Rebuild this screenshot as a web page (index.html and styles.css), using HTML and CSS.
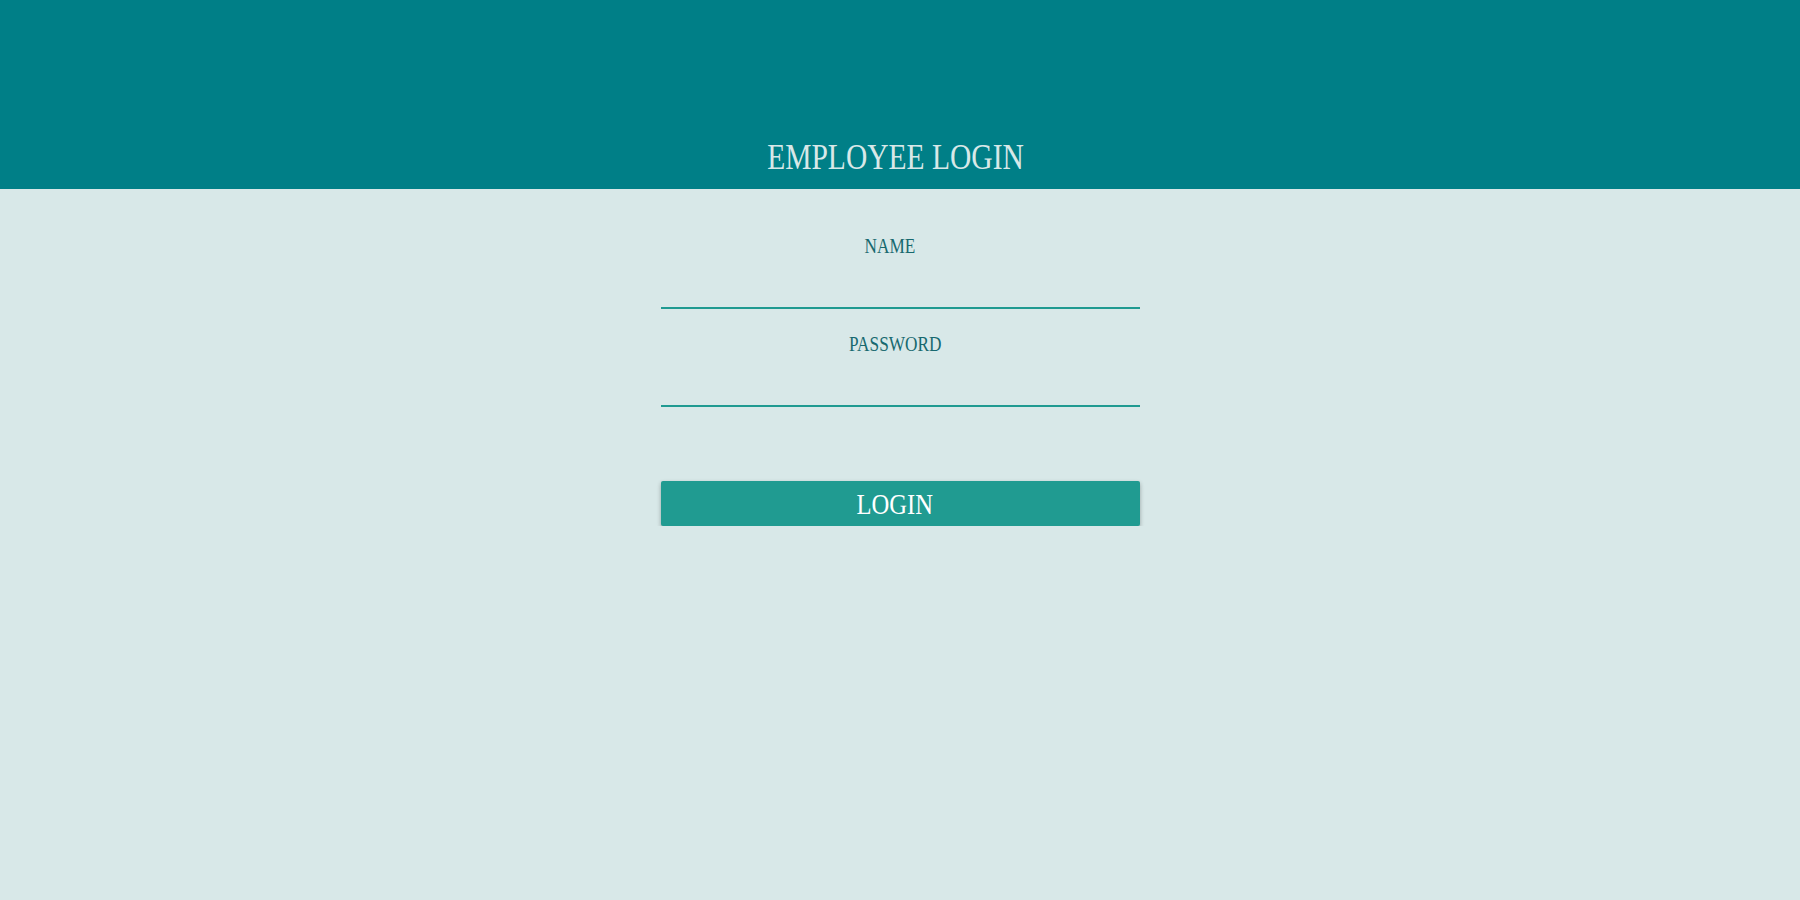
FILE: index.html
```html
<!DOCTYPE html>
<html>
<head>
<meta charset="utf-8">
<title>Employee Login</title>
<link rel="stylesheet" href="styles.css">
</head>
<body>
<header class="header">
  <h1 class="title"><span class="squeeze">EMPLOYEE LOGIN</span></h1>
</header>
<main class="main">
  <form class="form">
    <label class="label label-name"><span class="squeeze">NAME</span></label>
    <input class="field" type="text">
    <label class="label label-pass"><span class="squeeze">PASSWORD</span></label>
    <input class="field" type="password">
    <button class="btn" type="button"><span class="squeeze">LOGIN</span></button>
  </form>
</main>
</body>
</html>
```
FILE: styles.css
```css
html, body {
  margin: 0;
  padding: 0;
  background: #d8e8e8;
  font-family: "Liberation Serif", serif;
}
.header {
  height: 189px;
  box-sizing: border-box;
  background: #007f87;
  display: flex;
  align-items: flex-end;
  justify-content: center;
  padding: 0 9px 14px 0;
}
.title {
  margin: 0;
  font-weight: normal;
  font-size: 36px;
  line-height: 36px;
  color: #d8e8e8;
}
.squeeze {
  display: inline-block;
  transform: scaleX(0.82);
}
.main {
  display: flex;
  justify-content: center;
}
.form {
  width: 479px;
  display: flex;
  flex-direction: column;
  padding-top: 47px;
}
.label {
  font-size: 21px;
  line-height: 21px;
  color: #17696f;
  text-align: center;
}
.label-name { padding-right: 21px; }
.label-pass { padding-right: 10px; margin-top: 25px; }
.field {
  box-sizing: content-box;
  height: 50px;
  margin: 0;
  padding: 0;
  border: none;
  border-bottom: 2px solid #1f9a91;
  background: transparent;
  outline: none;
}
.btn {
  margin-top: 74px;
  height: 45px;
  padding: 0 11px 0 0;
  border: none;
  border-radius: 2px;
  background: #209b91;
  color: #ffffff;
  font-family: "Liberation Serif", serif;
  font-size: 30px;
  line-height: 45px;
  box-shadow: 0 2px 4px rgba(0, 0, 0, 0.3);
  cursor: pointer;
}
```
